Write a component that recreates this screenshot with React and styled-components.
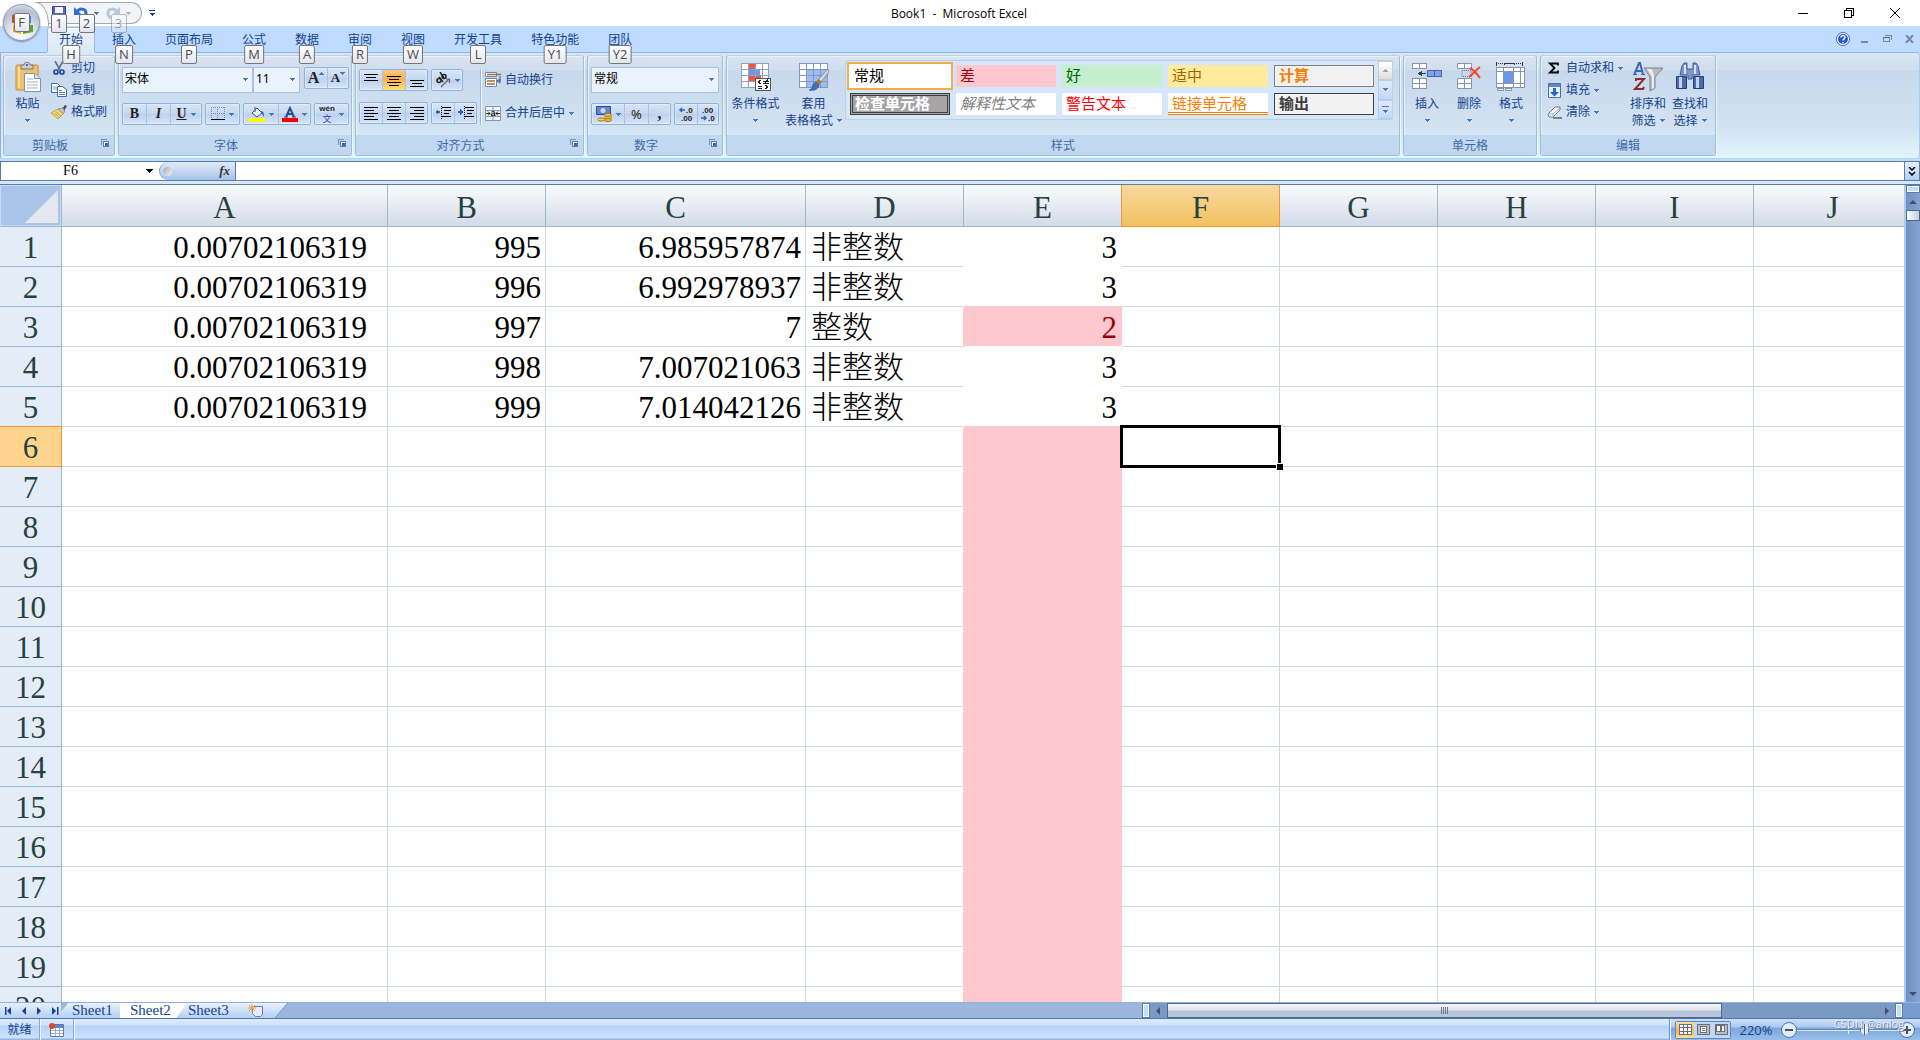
import React from "react";
import styled, { createGlobalStyle, css } from "styled-components";

const GlobalStyle = createGlobalStyle`
  * {
    box-sizing: border-box;
  }
  body {
    margin: 0;
    overflow: hidden;
    font-family: "Noto Sans", "Noto Sans CJK SC", sans-serif;
    font-size: 12px;
    line-height: 16px;
    color: #15428b;
  }
  button,
  input,
  select {
    font: inherit;
    color: inherit;
    margin: 0;
    padding: 0;
    border: none;
    border-radius: 0;
    background: none;
    outline: none;
  }
  svg {
    display: block;
    flex: none;
  }
`;

const Page = styled.div`
  display: flex;
  flex-direction: column;
  height: 100vh;
  background: #bfdbff;
`;

/* ---------- title bar ---------- */
const Header = styled.header`
  position: relative;
`;
const TitleBar = styled.div`
  display: flex;
  align-items: center;
  justify-content: space-between;
  height: 26px;
  padding-right: 2px;
  background: #fff;
`;
const TitleSide = styled.div`
  flex: 1;
  display: flex;
  justify-content: ${(props) => (props.$end ? "flex-end" : "flex-start")};
`;
const Title = styled.h1`
  margin: 0;
  padding-top: 1px;
  font: 12px/16px "Open Sans", sans-serif;
  color: #000;
`;
const WindowButton = styled.button`
  width: 46px;
  height: 24px;
  display: flex;
  align-items: center;
  justify-content: center;
`;
const QuickAccess = styled.div`
  position: relative;
  display: flex;
  align-items: flex-start;
  width: 106px;
  height: 22px;
  margin-left: 36px;
  padding: 3px 0 0 16px;
  border: 1px solid #a7a9ad;
  border-left: none;
  border-radius: 0 11px 11px 0;
  background: #f1f4f8;
  &::before {
    content: "";
    position: absolute;
    left: -13px;
    top: -1px;
    width: 24px;
    height: 44px;
    border: 1px solid #a7a9ad;
    border-radius: 50%;
    background: #fff;
    clip-path: inset(0 0 22px 12px);
  }
`;
const QuickButton = styled.button`
  position: relative;
  display: flex;
  align-items: center;
  gap: 6px;
  height: 14px;
  margin-right: ${(props) => props.$after || 0}px;
  opacity: ${(props) => (props.$disabled ? 0.45 : 1)};
`;
const CustomizeButton = styled.button`
  width: 20px;
  height: 22px;
  display: flex;
  align-items: center;
  justify-content: center;
`;
const OfficeButton = styled.button`
  position: absolute;
  left: 3px;
  top: 4px;
  width: 37px;
  height: 37px;
  display: flex;
  align-items: center;
  justify-content: center;
  border: 1px solid #8c99aa;
  border-radius: 50%;
  background: radial-gradient(circle at 50% 85%, #fff 0%, #e3e9f2 35%, #b3c0d4 70%, #eef2f8 100%);
  box-shadow: 0 1px 2px #7c8ca5;
`;
const KeyTip = styled.kbd`
  position: absolute;
  top: ${(props) => props.$top}px;
  left: 50%;
  transform: translateX(-50%);
  min-width: 16px;
  height: 19px;
  padding: 0 3px;
  border: 1px solid #767676;
  border-radius: 2px;
  background: linear-gradient(#fff, #e4e5f0);
  font: 13px/17px "Open Sans", sans-serif;
  text-align: center;
  color: #4c4c4c;
  z-index: 3;
`;

/* ---------- ribbon ---------- */
const TabBar = styled.nav`
  display: flex;
  gap: 5px;
  height: 26px;
  padding: 0 2px 0 47px;
  background: #bfdbff;
`;
const Tab = styled.button`
  position: relative;
  height: 26px;
  padding: 2px 12px 0;
  white-space: nowrap;
  ${(props) =>
    props.$active &&
    css`
      height: 25px;
      margin-top: 1px;
      border: 1px solid #9bbbe3;
      border-bottom: none;
      border-radius: 3px 3px 0 0;
      padding: 0 11px;
      background: linear-gradient(#ecf4fd, #dde8f5);
      box-shadow: inset 0 1px 0 #fff, 0 1px 0 #dde8f5;
      z-index: 1;
    `}
`;
const TabTools = styled.div`
  display: flex;
  align-items: center;
  gap: 8px;
  margin-left: auto;
  padding-right: 2px;
`;
const ToolButton = styled.button`
  display: flex;
  justify-content: center;
  width: 14px;
`;
const Ribbon = styled.section`
  display: flex;
  gap: 3px;
  height: 107px;
  padding: 2px 2px 0;
  border: 1px solid #8db2e3;
  border-right-color: #a9cdf0;
  border-bottom: 1px solid #a2e0f0;
  border-radius: 0 4px 4px 4px;
  background: linear-gradient(#dbe6f4 0, #cfdded 17px, #c7d8ed 18px, #d3e3f2 75px, #e3f4ff 104px);
`;
const Group = styled.section`
  flex: none;
  display: flex;
  flex-direction: column;
  width: ${(props) => props.$width}px;
  height: 101px;
  border: 1px solid #9ebfdb;
  border-top-color: #bccfe2;
  border-radius: 3px;
  box-shadow: 1px 1px 0 #eef6fd, inset 1px 1px 0 #e9f1fa;
`;
const GroupBody = styled.div`
  flex: 1;
  display: flex;
  padding: ${(props) => props.$pad || "1px 2px 0"};
`;
const GroupTitle = styled.h2`
  display: flex;
  align-items: center;
  height: 20px;
  margin: 0;
  padding-top: 1px;
  border-radius: 0 0 2px 2px;
  background: #c1d8f0;
  font-size: 12px;
  font-weight: normal;
  color: #3e6aaa;
  span {
    flex: 1;
    text-align: center;
  }
  button {
    display: flex;
    justify-content: center;
    width: 18px;
    height: 14px;
  }
`;
const Column = styled.div`
  display: flex;
  flex-direction: column;
  gap: ${(props) => props.$gap || 0}px;
`;
const Row = styled.div`
  display: flex;
  gap: ${(props) => (props.$gap === undefined ? 3 : props.$gap)}px;
`;
const BigButton = styled.button`
  display: flex;
  flex-direction: column;
  align-items: center;
  width: ${(props) => props.$width}px;
  height: 76px;
  padding-top: 5px;
  line-height: 17px;
  white-space: nowrap;
`;
const BigIcon = styled.span`
  height: 33px;
`;
const CaretLine = styled.span`
  display: flex;
  align-items: center;
  gap: 4px;
  height: 17px;
`;
const TextButton = styled.button`
  display: flex;
  align-items: center;
  gap: 4px;
  height: 22px;
  white-space: nowrap;
`;
const IconBox = styled.span`
  width: 16px;
  display: flex;
  justify-content: center;
`;
const Combo = styled.label`
  position: relative;
  display: block;
  width: ${(props) => props.$width}px;
  height: 26px;
  border: 1px solid #abc1de;
  background: #eaf2fb;
  select {
    appearance: none;
    width: 100%;
    height: 22px;
    padding: 0 2px;
    color: #000;
  }
  svg {
    position: absolute;
    right: 4px;
    top: 10px;
    pointer-events: none;
  }
`;
const ButtonStrip = styled.div`
  display: flex;
  height: 22px;
  border: 1px solid #8fb1de;
  border-radius: 2px;
  background: linear-gradient(#d6e4f6 0, #c9daf0 9px, #bdd1ec 10px, #d3e4f8 20px);
  box-shadow: inset 0 0 0 1px rgba(255, 255, 255, 0.35);
`;
const StripButton = styled.button`
  display: flex;
  align-items: ${(props) => (props.$raised ? "flex-start" : "center")};
  justify-content: center;
  gap: ${(props) => (props.$raised ? 0 : 4)}px;
  width: ${(props) => props.$width}px;
  font-size: 13px;
  color: #222;
  background: ${(props) =>
    props.$active ? "linear-gradient(#fdc88b, #fcae4e 9px, #fee07a)" : "none"};
  & + & {
    border-left: 1px solid #a9c3e6;
  }
  ${(props) =>
    props.$raised &&
    css`
      svg {
        margin-top: 4px;
      }
    `}
`;
const Letter = styled.span`
  font: ${(props) => props.$size || 14}px/20px "Liberation Serif", serif;
  font-weight: bold;
  font-style: ${(props) => (props.$italic ? "italic" : "normal")};
  text-decoration: ${(props) => (props.$underline ? "underline" : "none")};
`;
const Separator = styled.div`
  width: 2px;
  height: 56px;
  border-left: 1px solid #9bbce0;
  background: #f2f8fe;
`;

/* ---------- style gallery ---------- */
const Gallery = styled.div`
  display: flex;
  height: 60px;
  margin-top: 3px;
  border: 1px solid #b9d0ed;
  border-radius: 2px;
  background: #d4e6f8;
`;
const GalleryGrid = styled.div`
  display: grid;
  grid-template-columns: repeat(5, 100px);
  grid-auto-rows: 22px;
  gap: 6px;
  padding: 4px 4px 0;
`;
const StyleCell = styled.button`
  display: flex;
  align-items: center;
  padding: 0 4px 3px;
  font: 15px/18px "Noto Sans CJK SC", sans-serif;
  white-space: nowrap;
  color: ${(props) => props.$color};
  background: ${(props) => props.$fill || "#fff"};
  ${(props) => props.$bold && "font-weight: bold;"}
  ${(props) => props.$italic && "font-style: italic;"}
  ${(props) => props.$line && `border: 1px solid ${props.$line};`}
  ${(props) =>
    props.$selected &&
    css`
      outline: 2px solid #efb24b;
      outline-offset: 1px;
      box-shadow: 0 0 0 1px #fff;
    `}
  ${(props) =>
    props.$boxed &&
    css`
      border: 3px double #3f3f3f;
      padding: 0 2px 2px;
    `}
  ${(props) => props.$linked && "border-bottom: 3px double #ff8001; padding-bottom: 0;"}
`;
const GalleryScroll = styled.div`
  display: flex;
  flex-direction: column;
  width: 14px;
  button {
    flex: 1;
    display: flex;
    align-items: center;
    justify-content: center;
    border: 1px solid #b4cbec;
    border-right: none;
    background: linear-gradient(#dfeafb, #c2d8f7);
  }
  button:disabled {
    border-color: #ccc;
    background: linear-gradient(#fff, #dedede);
  }
`;

/* ---------- formula bar ---------- */
const FormulaBar = styled.div`
  display: flex;
  height: 20px;
  margin-top: 2px;
  border-top: 1px solid #567db0;
  border-bottom: 1px solid #567db0;
  background: #fff;
`;
const NameBox = styled.input`
  width: 140px;
  border-left: 1px solid #567db0;
  font: 14px/18px "Liberation Serif", serif;
  text-align: center;
  color: #000;
`;
const NameDrop = styled.button`
  display: flex;
  align-items: center;
  justify-content: center;
  width: 19px;
`;
const FxButton = styled.button`
  display: flex;
  align-items: center;
  justify-content: space-between;
  width: 77px;
  padding: 0 5px 0 3px;
  border-right: 1px solid #567db0;
  border-left: 1px solid #7da0cd;
  border-radius: 9px 0 0 9px;
  background: linear-gradient(#dfe9f7, #c6d8f1 50%, #a5c1e9);
  font: italic bold 13px/18px "Liberation Serif", serif;
  color: #3a3a3a;
`;
const Knob = styled.span`
  width: 9px;
  height: 9px;
  border-radius: 50%;
  background: linear-gradient(135deg, #9fa9b8, #f2f5f9);
`;
const FormulaInput = styled.input`
  flex: 1;
  min-width: 0;
  color: #000;
`;
const ExpandButton = styled.button`
  display: flex;
  align-items: center;
  justify-content: center;
  width: 16px;
  border: 1px solid #567db0;
  border-width: 0 1px;
  background: linear-gradient(#e6effb, #b5cdee);
`;
const Strip = styled.div`
  height: 3px;
  background: #d9e7f8;
`;

/* ---------- sheet ---------- */
const Workspace = styled.main`
  flex: 1;
  display: flex;
  min-height: 0;
  border-top: 1px solid #567db0;
`;
const SheetView = styled.div`
  flex: 1;
  min-width: 0;
  overflow: hidden;
  background: #fff;
`;
const Sheet = styled.table`
  width: 100%;
  table-layout: fixed;
  border-collapse: separate;
  border-spacing: 0;
  font: 31px/36px "Liberation Serif", "Noto Sans CJK SC", serif;
  color: #000;
`;
const ColumnHead = styled.th`
  position: relative;
  z-index: 1;
  height: 42px;
  padding: 5px 0 0;
  border-right: 1px solid #9eb6ce;
  border-bottom: 1px solid #9eb6ce;
  background: linear-gradient(#f9fcfd, #d3dbe9);
  font-weight: normal;
  color: #27413e;
  ${(props) =>
    props.$active &&
    css`
      border-color: #f29536;
      background: linear-gradient(#f9d99f, #f1c15f);
      box-shadow: -1px 0 0 #f29536;
    `}
`;
const Corner = styled.th`
  position: relative;
  z-index: 1;
  padding: 0;
  border: 1px solid #9eb6ce;
  border-width: 0 1px 1px 0;
  background: #a9c4e9;
  box-shadow: inset 0 0 0 1px #c9dcf4;
  svg {
    margin: 3px 3px 2px auto;
  }
`;
const RowHead = styled.th`
  height: 40px;
  padding: 3px 0 0;
  border-right: 1px solid #9eb6ce;
  border-bottom: 1px solid #9eb6ce;
  background: #e4ecf7;
  font-weight: normal;
  color: #27413e;
  ${(props) =>
    props.$active &&
    css`
      border-color: #f29536;
      background: #ffd58d;
      box-shadow: 0 -1px 0 #f29536;
    `}
`;
const Cell = styled.td`
  position: relative;
  padding: ${(props) => (props.$indent ? "3px 20px 0 5px" : "3px 4px 0 5px")};
  border-right: 1px solid #d0d7e5;
  border-bottom: 1px solid #d0d7e5;
  font-weight: 300;
  white-space: nowrap;
  text-align: ${(props) => (props.$text ? "left" : "right")};
  ${(props) =>
    props.$fill &&
    css`
      background: ${props.$fill};
      border-color: ${props.$fill};
      box-shadow: -1px 0 0 ${props.$fill}, 0 -1px 0 ${props.$fill};
      color: ${props.$ink};
    `}
`;
const Selection = styled.span`
  position: absolute;
  inset: -2px;
  border: 3px solid #000;
  z-index: 1;
  &::after {
    content: "";
    position: absolute;
    right: -5px;
    bottom: -5px;
    width: 6px;
    height: 6px;
    border: 1px solid #fff;
    border-width: 1px 0 0 1px;
    background: #000;
  }
`;
const VScroll = styled.div`
  display: flex;
  flex-direction: column;
  align-items: center;
  width: 16px;
  border-left: 2px solid #a9cbf3;
  background: linear-gradient(90deg, #7091bf, #85a3ce);
`;
const Splitter = styled.span`
  flex: none;
  width: ${(props) => (props.$vertical ? 8 : 14)}px;
  height: ${(props) => (props.$vertical ? 15 : 8)}px;
  border: 2px solid #fff;
  outline: 1px solid #567db0;
  outline-offset: -1px;
  background: #c7dbf4;
`;
const ScrollButton = styled.button`
  flex: none;
  display: flex;
  align-items: center;
  justify-content: center;
  width: ${(props) => (props.$wide ? 17 : 14)}px;
  height: ${(props) => (props.$wide ? 15 : 17)}px;
`;
const VThumb = styled.span`
  width: 14px;
  height: 11px;
  border: 1px solid #4f6691;
  background: linear-gradient(90deg, #fff, #c3cedc);
`;
const Fill = styled.span`
  flex: 1;
`;

/* ---------- sheet tabs ---------- */
const BottomBar = styled.div`
  display: flex;
  height: 17px;
  border-top: 1px solid #8db2e3;
  border-bottom: 1px solid #4f78ad;
  background: #7a9bd0;
`;
const BottomMain = styled.div`
  flex: 1;
  display: flex;
  background: #9db7dc;
`;
const SheetNav = styled.div`
  display: flex;
  width: 62px;
  padding-left: 2px;
  border-right: 1px solid #8db2e3;
  background: linear-gradient(#e6f0fc, #b7d0f3);
  button {
    display: flex;
    align-items: center;
    justify-content: center;
    width: 15px;
  }
`;
const SheetTab = styled.button`
  position: relative;
  width: 58px;
  padding-left: 10px;
  font: 15px/15px "Liberation Serif", serif;
  text-align: left;
  z-index: 0;
  &::before {
    content: "";
    position: absolute;
    z-index: -1;
    inset: 0 -8px 0 0;
    border-right: 1px solid #6f96cc;
    background: linear-gradient(#e9f2fd, #b5cff5);
    transform: skewX(-40deg);
  }
  ${(props) =>
    props.$active &&
    css`
      z-index: 1;
      background: #fff;
      clip-path: polygon(0 0, 115% 0, 97% 100%, 0 100%);
      &::before {
        background: #fff;
      }
    `}
`;
const NewSheet = styled(SheetTab)`
  width: 38px;
  padding-left: 12px;
`;
const HScroll = styled.div`
  display: flex;
  align-items: center;
  width: 40%;
  margin-left: auto;
  background: #7a99c3;
`;
const HThumb = styled.span`
  display: flex;
  align-items: center;
  justify-content: center;
  gap: 1px;
  width: 73%;
  height: 15px;
  border: 1px solid #4f6691;
  background: linear-gradient(#f4f6fa 0, #dfe4ec 6px, #b4c3d6 7px, #bccbdc 14px);
  i {
    width: 1px;
    height: 7px;
    background: #6c7785;
  }
`;

/* ---------- status bar ---------- */
const StatusBar = styled.footer`
  position: relative;
  display: flex;
  height: 21px;
  background: linear-gradient(#dcebfd 0, #cfe1fa 6px, #b4d1f6 7px, #cfe2fb 19px, #8fb6e6 20px);
`;
const StatusItem = styled.div`
  display: flex;
  align-items: center;
  justify-content: center;
  width: ${(props) => props.$width}px;
  border-right: 1px solid #8ba9d1;
  box-shadow: 1px 0 0 #f3f8fe;
`;
const StatusRight = styled.div`
  display: flex;
  align-items: center;
  margin-left: auto;
  padding: 0 5px;
  border-left: 1px solid #6d94c8;
  box-shadow: inset 1px 0 0 #e9f2fd;
  background: linear-gradient(#cfe0f8 0, #a9c8f1 8px, #7ea6db 9px, #98bdea 20px);
`;
const ViewButtons = styled.div`
  display: flex;
  height: 18px;
  border: 1px solid #5f87bf;
  border-radius: 2px;
`;
const ViewButton = styled.button`
  display: flex;
  align-items: center;
  justify-content: center;
  width: 18px;
  background: ${(props) => (props.$active ? "linear-gradient(#fbdcae, #f9b44d 9px, #fee391)" : "#c0d7f5")};
`;
const ZoomValue = styled.button`
  width: 50px;
  font-family: "Open Sans", sans-serif;
  font-size: 13px;
`;
const RoundButton = styled.button`
  display: flex;
  align-items: center;
  justify-content: center;
  width: 16px;
  height: 16px;
  border: 1px solid #4d6f9f;
  border-radius: 50%;
  background: #e3edf9;
`;
const ZoomRange = styled.input`
  appearance: none;
  width: 102px;
  height: 18px;
  background: linear-gradient(#5f86bd, #5f86bd) center 8px / 100% 1px no-repeat,
    linear-gradient(#d8e7fa, #d8e7fa) center 9px / 100% 1px no-repeat,
    linear-gradient(#e9f2fd, #e9f2fd) center 5px / 1px 8px no-repeat;
  &::-webkit-slider-thumb {
    appearance: none;
    width: 9px;
    height: 12px;
    background: linear-gradient(90deg, #44648f 1px, #e8f0fb 1px, #e8f0fb 4px, #44648f 4px, #44648f 5px, #e8f0fb 5px, #e8f0fb 8px, #44648f 8px);
    clip-path: polygon(0 0, 100% 0, 100% 65%, 50% 100%, 0 65%);
  }
`;
const Watermark = styled.span`
  position: absolute;
  right: 16px;
  top: -3px;
  font: 11px/16px "Open Sans", sans-serif;
  color: #e8edf4;
  text-shadow: 1px 1px 0 #75849c;
  pointer-events: none;
`;

/* ---------- icons ---------- */
const Svg = ({ w, h, children, crisp }) => (
  <svg
    width={w}
    height={h}
    viewBox={`0 0 ${w} ${h}`}
    fill="none"
    shapeRendering={crisp ? "crispEdges" : undefined}
    aria-hidden="true"
  >
    {children}
  </svg>
);
const Caret = ({ color = "#4a79b8", up }) => (
  <Svg w={5} h={3} crisp>
    <path d={up ? "M0 3h5V2H4V1H3V0H2v1H1v1H0z" : "M0 0h5v1H4v1H3v1H2V2H1V1H0z"} fill={color} />
  </Svg>
);
const Arrow = ({ dir, color = "#15428b", bar }) => {
  const d = {
    left: "M7 1v8l-4-4z",
    right: "M3 1v8l4-4z",
    up: "M1 7h8l-4-4z",
    down: "M1 3h8l-4 4z",
  }[dir];
  return (
    <Svg w={10} h={10}>
      <path d={d} fill={color} />
      {bar && <path d={dir === "left" ? "M1 1h1.500v8h-1.500z" : "M8 1h1.500v8h-1.500z"} fill={color} />}
    </Svg>
  );
};
const SaveIcon = () => (
  <Svg w={14} h={14}>
    <path d="M.5.5h13v13h-13z" fill="#5b63c9" stroke="#3c3f9c" />
    <path d="M3 1h8v6H3z" fill="#f3f4fc" />
    <path d="M4 9h7v4H4z" fill="#c5c9ea" />
  </Svg>
);
const UndoIcon = ({ flip, color = "#2f6fd0" }) => (
  <Svg w={14} h={14}>
    <g transform={flip ? "matrix(-1 0 0 1 14 0)" : undefined}>
      <path d="M3 6c2-4 9-4 9 1 0 2-1 4-3 5" stroke={color} strokeWidth="3" />
      <path d="M0 1v8h8z" fill={color} />
    </g>
  </Svg>
);
const OfficeIcon = () => (
  <Svg w={24} h={24}>
    <path d="M2 4l9-2v9l-9 1z" fill="#d8421a" />
    <path d="M5 6l4-1v4l-4 1z" fill="#fbe3d8" />
    <path d="M13 4l8 1v7h-8z" fill="#3d7edb" />
    <path d="M3 14h8v9l-8-2z" fill="#f6a81c" />
    <path d="M13 14h10v7l-10 2z" fill="#5fa526" />
    <path d="M15 16h5v3l-5 1z" fill="#e4f2d3" />
  </Svg>
);
const PasteIcon = () => (
  <Svg w={28} h={30}>
    <rect x="2" y="3" width="22" height="25" rx="1" fill="#f2c067" stroke="#c78a35" />
    <path d="M4 5h2v21H4z" fill="#f9dc9d" />
    <path d="M7 3h3c0-4 6-4 6 0h3v4H7z" fill="#c9ced6" stroke="#6f7680" />
    <circle cx="13" cy="3" r="1" fill="#444" />
    <path d="M10.500 11.500h10l6 5v13h-16z" fill="#fff" stroke="#7e93b3" />
    <path d="M20.500 11.500v5h6" fill="#dbe6f5" stroke="#7e93b3" />
    <path d="M13 17h6M13 20h11M13 23h11M13 26h11" stroke="#9db1cf" />
  </Svg>
);
const CutIcon = () => (
  <Svg w={14} h={14}>
    <path d="M3 0l5 9M11 0L6 9" stroke="#5b6f8f" strokeWidth="1.600" />
    <circle cx="4" cy="11" r="2" stroke="#1f4e9e" strokeWidth="1.700" />
    <circle cx="10" cy="11" r="2" stroke="#1f4e9e" strokeWidth="1.700" />
  </Svg>
);
const CopyIcon = () => (
  <Svg w={16} h={14}>
    <path d="M.5.5h6l3 3v6h-9z" fill="#fff" stroke="#3f69ad" />
    <path d="M2 4h4M2 6h4" stroke="#7a9bd0" />
    <path d="M6.500 3.500h5l4 3v7h-9z" fill="#fff" stroke="#3f69ad" />
    <path d="M8 7.500h3M8 9.500h6M8 11.500h6" stroke="#5b84c4" />
  </Svg>
);
const BrushIcon = () => (
  <Svg w={16} h={14}>
    <path d="M11 4l3-4 2 1-3 5z" fill="#4a3f86" />
    <path d="M7 4l5-1 2 3-2 3z" fill="#c9c6bd" stroke="#77736a" strokeWidth=".7" />
    <path d="M0 8l7-4 5 5-5 5z" fill="#f3d873" stroke="#a98b2c" strokeWidth=".7" />
    <path d="M3 8l5 4M5 7l5 4" stroke="#b8963a" strokeWidth=".7" />
  </Svg>
);
const LauncherIcon = () => (
  <Svg w={8} h={8} crisp>
    <path d="M0 6V0h6" stroke="#6f93c2" strokeWidth="2" />
    <path d="M2.500 2.500h5v5h-5z" fill="#fff" stroke="#5b7fb0" />
    <path d="M4 4h3v3H4z" fill="#44679a" />
  </Svg>
);
const BorderIcon = () => (
  <Svg w={14} h={14} crisp>
    <path d="M0 .5h14M0 6.500h14M.5 0v12M6.500 0v12M13.500 0v12" stroke="#7089a8" strokeDasharray="1 1" />
    <path d="M0 12h14v1H0z" fill="#000" />
  </Svg>
);
const FillIcon = () => (
  <Svg w={16} h={16}>
    <path d="M3 7l5-5 5 5-5 4z" fill="#eef3fa" stroke="#41506a" />
    <path d="M6 1v5" stroke="#41506a" />
    <path d="M12 5c3 0 3 3 3 6l-2-3z" fill="#2f6fd0" />
    <path d="M0 12h16v4H0z" fill="#ffff00" />
  </Svg>
);
const FontColorIcon = () => (
  <Svg w={16} h={16}>
    <path d="M4 11L8 2l4 9M5.500 8h5" stroke="#2b4f8c" strokeWidth="2" />
    <path d="M2 11h4M10 11h4" stroke="#2b4f8c" />
    <path d="M0 12h16v4H0z" fill="#f00" />
  </Svg>
);
const Phonetic = styled.span`
  display: flex;
  flex-direction: column;
  align-items: center;
  font: bold 8px/9px "Liberation Sans", sans-serif;
  color: #222;
  b {
    font: 9px/11px "Noto Sans CJK SC", sans-serif;
    color: #2a3fc0;
  }
`;
const Lines = ({ rows }) => (
  <Svg w={14} h={14} crisp>
    {rows.map(([x, y, w]) => (
      <path key={y} d={`M${x} ${y}h${w}v1h-${w}z`} fill="#000" />
    ))}
  </Svg>
);
const IndentIcon = ({ flip }) => (
  <Svg w={16} h={14} crisp>
    <path d="M7 1h9v1H7zM9 4h7v1H9zM9 7h5v1H9zM7 10h9v1H7z" fill="#000" />
    <path d="M6.500 0v14" stroke="#000" strokeDasharray="1 1" />
    <path d={flip ? "M0 5h2V3l3 3-3 3V7H0z" : "M5 5H3V3L0 6l3 3V7h2z"} fill="#2f62c0" />
  </Svg>
);
const OrientIcon = () => (
  <Svg w={16} h={16}>
    <circle cx="4" cy="8.500" r="2" stroke="#222" strokeWidth="1.500" />
    <path d="M4 5l4 5" stroke="#222" strokeWidth="1.500" />
    <circle cx="9" cy="4.500" r="2" stroke="#222" strokeWidth="1.500" />
    <path d="M5 0l4 6" stroke="#222" strokeWidth="1.500" />
    <path d="M6 15l8-8M14.500 7v4M15 7h-4" stroke="#6d5f66" strokeWidth="1.200" />
  </Svg>
);
const WrapIcon = () => (
  <Svg w={16} h={16}>
    <path d="M.5.5h11v4H.5zM.5 6.500h11v8H.5z" fill="#fff" stroke="#7287a5" />
    <path d="M2 2.500h14M2 9h8M2 12h8" stroke="#a0702f" strokeWidth="1.500" />
    <path d="M15 4v5h-2M12 9l3-2v4z" stroke="#44638f" />
  </Svg>
);
const MergeIcon = () => (
  <Svg w={16} h={15}>
    <path d="M.5.5h15v14H.5zM.5 4.500h15M.5 10.500h15M8 .5v4M8 10.500v4" fill="#f4f7fb" stroke="#8598b3" />
    <text x="5.500" y="10" fontFamily="Liberation Sans" fontWeight="bold" fontSize="9" fill="#111">
      a
    </text>
    <path d="M1 7.500h4M11 7.500h4M3 5.500l2 2-2 2M13 5.500l-2 2 2 2" stroke="#222" />
  </Svg>
);
const MoneyIcon = () => (
  <Svg w={16} h={16}>
    <path d="M.5.5h14v8H.5z" fill="#5f86cf" stroke="#2e4f93" />
    <circle cx="7" cy="4.500" r="2.500" fill="#c8d9f3" />
    <ellipse cx="12" cy="9" rx="3.500" ry="1.500" fill="#ffd75e" stroke="#a9781b" />
    <ellipse cx="12" cy="11.500" rx="3.500" ry="1.500" fill="#f4b93a" stroke="#a9781b" />
    <ellipse cx="5" cy="13.500" rx="3.500" ry="1.500" fill="#ffd75e" stroke="#a9781b" />
    <ellipse cx="12" cy="14" rx="3.500" ry="1.500" fill="#f4b93a" stroke="#a9781b" />
  </Svg>
);
const DecimalIcon = ({ less }) => (
  <Svg w={16} h={16}>
    <text x={less ? 2 : 8} y="7" fontFamily="Liberation Sans" fontWeight="bold" fontSize="8" fill="#222">
      {less ? ".00" : ".0"}
    </text>
    <text x={less ? 8 : 3} y="15" fontFamily="Liberation Sans" fontWeight="bold" fontSize="8" fill="#222">
      {less ? ".0" : ".00"}
    </text>
    <path d={less ? "M1 12h5M4 10l2 2-2 2" : "M2 4h5M4 2L2 4l2 2"} stroke="#2f62c0" strokeWidth="1.500" />
  </Svg>
);
const ConditionIcon = () => (
  <Svg w={30} h={30} crisp>
    <path d="M.5 1.500h27v24H.5z" fill="#fff" />
    <path d="M7 1h7v6H7zM7 13h13v6H7z" fill="#f0553f" />
    <path d="M7 7h12v6H7z" fill="#6c97ea" />
    <path d="M.5 1v25M7.500 1v25M14.500 1v25M21.500 1v25M27.500 1v25M0 7.500h28M0 13.500h28M0 19.500h28M0 25.500h28M0 1.500h28" stroke="#8da3c4" />
    <path d="M14.500 16.500h15v12h-15z" fill="#fafafa" stroke="#555" />
    <path d="M20 18l-3 2 3 2M17 24h4M17 26h4M22 19h6M22 21h6M27 17l-3 5M24 23l3 2-3 2" stroke="#222" />
  </Svg>
);
const TableStyleIcon = () => (
  <Svg w={30} h={30}>
    <path d="M.5 1.500h28v24H.5z" fill="#fff" />
    <path d="M7 7h21v18H7z" fill="#9dbdf2" />
    <path d="M.5 1v25M7.500 1v25M14.500 1v25M21.500 1v25M28.500 1v25M0 1.500h29M0 7.500h29M0 13.500h29M0 19.500h29M0 25.500h29" stroke="#7f9ac2" />
    <path d="M29 7l1 3-9 11-3-2z" fill="#d9d9d9" stroke="#777" strokeWidth=".7" />
    <path d="M20 17l3 3-3 3-3-3z" fill="#b8792c" />
    <path d="M10 28c4 0 3-7 7-8l3 3c-1 5-6 6-10 5z" fill="#3f6fbf" stroke="#2c4f8e" strokeWidth=".7" />
  </Svg>
);
const InsertCellIcon = () => (
  <Svg w={32} h={28} crisp>
    <path d="M1.500 1.500h14v5h-14zM8.500 1v5M1.500 16.500h14v10h-14zM8.500 16v10M1 21.500h14" fill="#fff" stroke="#8794ab" />
    <path d="M16.500 8.500h14v6h-14z" fill="#7fa3ea" stroke="#4463a8" />
    <path d="M23.500 8v6" stroke="#4463a8" />
    <path d="M7 11h8v1H7zM7 11.500l4-3v6z" fill="#333f52" />
  </Svg>
);
const DeleteCellIcon = () => (
  <Svg w={26} h={28}>
    <path d="M1.500 1.500h14v5h-14zM8.500 1v5M1.500 16.500h14v10h-14zM8.500 16v10M1 21.500h14" fill="#fff" stroke="#8794ab" />
    <path d="M6 8.500h9v6H6z" stroke="#5472b0" strokeDasharray="1 1" />
    <path d="M14 6c4 2 7 6 10 10M24 5c-4 3-7 7-11 10" stroke="#ee4a2c" strokeWidth="2" />
  </Svg>
);
const FormatCellIcon = () => (
  <Svg w={32} h={30} crisp>
    <path d="M1 1.500h27" stroke="#333" strokeDasharray="1 1" />
    <path d="M1.500 0v4M27.500 0v4M9 1.500h11M9 1v2M19 1v2" stroke="#333" />
    <path d="M1.500 5.500h28v20h-28z" fill="#fff" stroke="#8794ab" />
    <path d="M1 9.500h28M1 21.500h28M8.500 5v20M18.500 5v20M25.500 5v20" stroke="#8794ab" />
    <path d="M9 10h9v11H9z" fill="#6e97e8" />
    <path d="M2 26h6v2H2zM10 26h6v2h-6z" fill="#fff" stroke="#8794ab" />
  </Svg>
);
const SigmaIcon = () => (
  <Svg w={12} h={12}>
    <path d="M10 3.500V1.500H2l4.500 4.500L2 10.500h8v-2" stroke="#000" strokeWidth="1.800" />
  </Svg>
);
const FillDownIcon = () => (
  <Svg w={13} h={15}>
    <path d="M.5.5h12v14H.5z" fill="#eaf1fb" stroke="#4b6fae" />
    <path d="M1 1h11v3H1z" fill="#6387c6" />
    <path d="M5 5h3v4h3l-4.500 4.500L2 9h3z" fill="#2b62cf" />
  </Svg>
);
const EraserIcon = () => (
  <Svg w={15} h={13}>
    <path d="M1 8l7-7h5v3l-7 7H2z" fill="#f6f7fa" stroke="#707a8c" />
    <path d="M1 8h5l7-6M6 8v3" stroke="#a3adbd" />
    <path d="M6 12h9" stroke="#222" />
  </Svg>
);
const SortIcon = () => (
  <Svg w={30} h={30}>
    <path d="M11 6h19l-8 9v11l-5 3V15z" fill="#b7bcc3" stroke="#7d838c" />
    <path d="M14 7h5l2 7v12l-2 1V15z" fill="#eceef1" />
    <path d="M1.500 12L6 1h1l3 11M3 9h6" stroke="#3b63b5" strokeWidth="2" />
    <path d="M0 12.500h4M8 12.500h4" stroke="#3b63b5" />
    <path d="M3 19v-2h8L2 27h8l1-2" stroke="#8b2b2f" strokeWidth="2" />
  </Svg>
);
const FindIcon = () => (
  <Svg w={30} h={28}>
    <path d="M7 4l2-3h3v6h6V1h3l2 3 2 9h-8v4h-4v-4H5z" fill="#7d98c8" stroke="#3c5a93" />
    <path d="M1.500 14.500h10v12h-10zM18.500 14.500h10v12h-10z" fill="#4a6aa9" stroke="#233f77" />
    <path d="M4 15h3v11H4zM21 15h3v11h-3z" fill="#c3d3ee" />
    <path d="M10 3v9M20 3v9" stroke="#d6e2f5" strokeWidth="2" />
  </Svg>
);
const HelpIcon = () => (
  <Svg w={14} h={14}>
    <circle cx="7" cy="7" r="6.500" fill="#fff" stroke="#3e66b8" />
    <circle cx="7" cy="7" r="5" fill="#2557cf" />
    <path d="M5 5.500c0-2.500 4-2.500 4 0 0 1.500-2 1.300-2 3M7 10v1.300" stroke="#fff" strokeWidth="1.400" />
  </Svg>
);
const MacroIcon = () => (
  <Svg w={16} h={14}>
    <path d="M1.500 1.500h13v12h-13z" fill="#fff" stroke="#5b78a9" />
    <path d="M2 2h12v3H2z" fill="#5c86d3" />
    <path d="M2 7.500h12M2 10.500h12M6.500 5v8M10.500 5v8" stroke="#9db0cf" />
    <circle cx="3" cy="3" r="3" fill="#e4472b" />
  </Svg>
);
const NewSheetIcon = () => (
  <Svg w={16} h={13}>
    <path d="M4.500 2.500h10v8l-2 2h-5l-3-3z" fill="#e6edf8" stroke="#6280b0" />
    <path d="M4 0v8M0 4h8M1 1l6 6M7 1L1 7" stroke="#e9a021" />
  </Svg>
);

/* ---------- data ---------- */
const TABS = [
  ["开始", "H"],
  ["插入", "N"],
  ["页面布局", "P"],
  ["公式", "M"],
  ["数据", "A"],
  ["审阅", "R"],
  ["视图", "W"],
  ["开发工具", "L"],
  ["特色功能", "Y1"],
  ["团队", "Y2"],
];
const STYLES = [
  { name: "常规", $color: "#000", $selected: true },
  { name: "差", $color: "#9c0006", $fill: "#ffc7ce" },
  { name: "好", $color: "#006100", $fill: "#c6efce" },
  { name: "适中", $color: "#9c6500", $fill: "#ffeb9c" },
  { name: "计算", $color: "#fa7d00", $fill: "#f2f2f2", $line: "#7f7f7f", $bold: true },
  { name: "检查单元格", $color: "#fff", $fill: "#a5a5a5", $boxed: true, $bold: true },
  { name: "解释性文本", $color: "#7f7f7f", $italic: true },
  { name: "警告文本", $color: "#f00" },
  { name: "链接单元格", $color: "#fa7d00", $linked: true },
  { name: "输出", $color: "#3f3f3f", $fill: "#f2f2f2", $line: "#3f3f3f", $bold: true },
];
const COLUMNS = [
  ["A", 326],
  ["B", 158],
  ["C", 260],
  ["D", 158],
  ["E", 158],
  ["F", 158],
  ["G", 158],
  ["H", 158],
  ["I", 158],
  ["J", 158],
];
const DATA = [
  ["0.00702106319", "995", "6.985957874", "非整数", "3"],
  ["0.00702106319", "996", "6.992978937", "非整数", "3"],
  ["0.00702106319", "997", "7", "整数", "2"],
  ["0.00702106319", "998", "7.007021063", "非整数", "3"],
  ["0.00702106319", "999", "7.014042126", "非整数", "3"],
];
const ROW_COUNT = 20;

const ALIGN_TOP = [[0, 1, 14], [2, 4, 10], [0, 7, 14]];
const ALIGN_MIDDLE = [[0, 3, 14], [2, 6, 10], [0, 9, 14], [2, 12, 10]];
const ALIGN_BOTTOM = [[0, 7, 14], [2, 10, 10], [0, 13, 14]];
const ALIGN_LEFT = [[0, 1, 14], [0, 4, 10], [0, 7, 14], [0, 10, 10], [0, 13, 14]];
const ALIGN_CENTER = [[0, 1, 14], [2, 4, 10], [0, 7, 14], [2, 10, 10], [0, 13, 14]];
const ALIGN_RIGHT = [[0, 1, 14], [4, 4, 10], [0, 7, 14], [4, 10, 10], [0, 13, 14]];

const RibbonGroup = ({ title, width, pad, launcher, children }) => (
  <Group $width={width}>
    <GroupBody $pad={pad}>{children}</GroupBody>
    <GroupTitle>
      <span>{title}</span>
      {launcher && (
        <button aria-label={title}>
          <LauncherIcon />
        </button>
      )}
    </GroupTitle>
  </Group>
);

const Big = ({ icon, lines, width }) => (
  <BigButton $width={width}>
    <BigIcon>{icon}</BigIcon>
    <span>{lines[0]}</span>
    <CaretLine>
      {lines[1]}
      <Caret />
    </CaretLine>
  </BigButton>
);

const TitleArea = () => (
  <TitleBar>
    <TitleSide>
      <QuickAccess>
        <QuickButton aria-label="保存" $after={8}>
          <SaveIcon />
          <KeyTip $top={8}>1</KeyTip>
        </QuickButton>
        <QuickButton aria-label="撤消" $after={7}>
          <UndoIcon />
          <Caret />
          <KeyTip $top={8}>2</KeyTip>
        </QuickButton>
        <QuickButton aria-label="恢复" $disabled>
          <UndoIcon flip color="#7d8ea8" />
          <Caret color="#777" />
          <KeyTip $top={8}>3</KeyTip>
        </QuickButton>
      </QuickAccess>
      <CustomizeButton aria-label="自定义快速访问工具栏">
        <Svg w={6} h={6} crisp>
          <path d="M0 0h6v1H0zM0 3h6L3 6z" fill="#1f3f77" />
        </Svg>
      </CustomizeButton>
    </TitleSide>
    <Title>Book1 &nbsp;-&nbsp; Microsoft Excel</Title>
    <TitleSide $end>
      <WindowButton aria-label="最小化">
        <Svg w={10} h={10} crisp>
          <path d="M0 5h10v1H0z" fill="#000" />
        </Svg>
      </WindowButton>
      <WindowButton aria-label="还原">
        <Svg w={10} h={10} crisp>
          <path d="M.5 2.500h7v7h-7zM2.500 2V.5h7v7H8" stroke="#000" />
        </Svg>
      </WindowButton>
      <WindowButton aria-label="关闭">
        <Svg w={10} h={10}>
          <path d="M0 0l10 10M10 0L0 10" stroke="#000" />
        </Svg>
      </WindowButton>
    </TitleSide>
  </TitleBar>
);

const RibbonTabs = () => (
  <TabBar>
    {TABS.map(([name, key], i) => (
      <Tab key={name} $active={i === 0}>
        {name}
        <KeyTip $top={i === 0 ? 17 : 19}>{key}</KeyTip>
      </Tab>
    ))}
    <TabTools>
      <ToolButton aria-label="帮助">
        <HelpIcon />
      </ToolButton>
      <ToolButton aria-label="最小化工作簿">
        <Svg w={8} h={8} crisp>
          <path d="M0 6h7v2H0z" fill="#7b8798" />
        </Svg>
      </ToolButton>
      <ToolButton aria-label="还原工作簿">
        <Svg w={9} h={8} crisp>
          <path d="M.5 2.500h6v4h-6zM2 .5h6.500V5" stroke="#7b8798" />
          <path d="M0 2h7v1H0z" fill="#5c6676" />
        </Svg>
      </ToolButton>
      <ToolButton aria-label="关闭工作簿">
        <Svg w={9} h={8}>
          <path d="M1 0l7 8M8 0L1 8" stroke="#7b8798" strokeWidth="2" />
        </Svg>
      </ToolButton>
    </TabTools>
  </TabBar>
);

const ClipboardGroup = () => (
  <RibbonGroup title="剪贴板" width={112} launcher>
    <Row $gap={2}>
      <Big icon={<PasteIcon />} lines={["粘贴"]} width={43} />
      <Column>
        <TextButton>
          <IconBox>
            <CutIcon />
          </IconBox>
          剪切
        </TextButton>
        <TextButton>
          <IconBox>
            <CopyIcon />
          </IconBox>
          复制
        </TextButton>
        <TextButton>
          <IconBox>
            <BrushIcon />
          </IconBox>
          格式刷
        </TextButton>
      </Column>
    </Row>
  </RibbonGroup>
);

const FontGroup = () => (
  <RibbonGroup title="字体" width={234} pad="11px 3px 0" launcher>
    <Column $gap={10}>
      <Row $gap={0}>
        <Combo $width={131}>
          <select aria-label="字体">
            <option>宋体</option>
          </select>
          <Caret />
        </Combo>
        <Combo $width={47}>
          <select aria-label="字号">
            <option>11</option>
          </select>
          <Caret />
        </Combo>
        <Fill />
        <ButtonStrip>
          <StripButton $width={22} $raised aria-label="增大字号">
            <Letter $size={16}>A</Letter>
            <Caret up />
          </StripButton>
          <StripButton $width={21} $raised aria-label="减小字号">
            <Letter $size={13}>A</Letter>
            <Caret />
          </StripButton>
        </ButtonStrip>
      </Row>
      <Row>
        <ButtonStrip>
          <StripButton $width={23}>
            <Letter>B</Letter>
          </StripButton>
          <StripButton $width={24}>
            <Letter $italic>I</Letter>
          </StripButton>
          <StripButton $width={31}>
            <Letter $underline>U</Letter>
            <Caret />
          </StripButton>
        </ButtonStrip>
        <ButtonStrip>
          <StripButton $width={33} aria-label="边框">
            <BorderIcon />
            <Caret />
          </StripButton>
        </ButtonStrip>
        <ButtonStrip>
          <StripButton $width={34} aria-label="填充颜色">
            <FillIcon />
            <Caret />
          </StripButton>
          <StripButton $width={32} aria-label="字体颜色">
            <FontColorIcon />
            <Caret />
          </StripButton>
        </ButtonStrip>
        <ButtonStrip>
          <StripButton $width={33}>
            <Phonetic>
              wén<b>文</b>
            </Phonetic>
            <Caret />
          </StripButton>
        </ButtonStrip>
      </Row>
    </Column>
  </RibbonGroup>
);

const AlignGroup = () => (
  <RibbonGroup title="对齐方式" width={229} pad="13px 3px 0" launcher>
    <Row>
      <Column $gap={11}>
        <Row>
          <ButtonStrip>
            <StripButton $width={22} aria-label="顶端对齐">
              <Lines rows={ALIGN_TOP} />
            </StripButton>
            <StripButton $width={23} $active aria-label="垂直居中">
              <Lines rows={ALIGN_MIDDLE} />
            </StripButton>
            <StripButton $width={22} aria-label="底端对齐">
              <Lines rows={ALIGN_BOTTOM} />
            </StripButton>
          </ButtonStrip>
          <ButtonStrip>
            <StripButton $width={30} aria-label="方向">
              <OrientIcon />
              <Caret />
            </StripButton>
          </ButtonStrip>
        </Row>
        <Row>
          <ButtonStrip>
            <StripButton $width={22} aria-label="文本左对齐">
              <Lines rows={ALIGN_LEFT} />
            </StripButton>
            <StripButton $width={23} aria-label="居中">
              <Lines rows={ALIGN_CENTER} />
            </StripButton>
            <StripButton $width={22} aria-label="文本右对齐">
              <Lines rows={ALIGN_RIGHT} />
            </StripButton>
          </ButtonStrip>
          <ButtonStrip>
            <StripButton $width={22} aria-label="减少缩进量">
              <IndentIcon />
            </StripButton>
            <StripButton $width={22} aria-label="增加缩进量">
              <IndentIcon flip />
            </StripButton>
          </ButtonStrip>
        </Row>
      </Column>
      <Separator />
      <Column $gap={11}>
        <TextButton>
          <IconBox>
            <WrapIcon />
          </IconBox>
          自动换行
        </TextButton>
        <TextButton>
          <IconBox>
            <MergeIcon />
          </IconBox>
          合并后居中
          <Caret />
        </TextButton>
      </Column>
    </Row>
  </RibbonGroup>
);

const NumberGroup = () => (
  <RibbonGroup title="数字" width={136} pad="11px 3px 0" launcher>
    <Column $gap={10}>
      <Combo $width={128}>
        <select aria-label="数字格式">
          <option>常规</option>
        </select>
        <Caret />
      </Combo>
      <Row>
        <ButtonStrip>
          <StripButton $width={32} aria-label="会计数字格式">
            <MoneyIcon />
            <Caret />
          </StripButton>
          <StripButton $width={24}>%</StripButton>
          <StripButton $width={22}>
            <Letter $size={16}>,</Letter>
          </StripButton>
        </ButtonStrip>
        <ButtonStrip>
          <StripButton $width={22} aria-label="增加小数位数">
            <DecimalIcon />
          </StripButton>
          <StripButton $width={21} aria-label="减少小数位数">
            <DecimalIcon less />
          </StripButton>
        </ButtonStrip>
      </Row>
    </Column>
  </RibbonGroup>
);

const StylesGroup = () => (
  <RibbonGroup title="样式" width={674}>
    <Row $gap={0}>
      <Big icon={<ConditionIcon />} lines={["条件格式"]} width={53} />
      <Big icon={<TableStyleIcon />} lines={["套用", "表格格式"]} width={63} />
      <Gallery>
        <GalleryGrid>
          {STYLES.map(({ name, ...look }) => (
            <StyleCell key={name} {...look}>
              {name}
            </StyleCell>
          ))}
        </GalleryGrid>
        <GalleryScroll>
          <button disabled aria-label="上一行">
            <Caret up color="#a0a0a0" />
          </button>
          <button aria-label="下一行">
            <Caret />
          </button>
          <button aria-label="其他">
            <Svg w={7} h={7} crisp>
              <path d="M0 0h7v1H0zM1 4h5v1H5v1H4v1H3V6H2V5H1z" fill="#4a79b8" />
            </Svg>
          </button>
        </GalleryScroll>
      </Gallery>
    </Row>
  </RibbonGroup>
);

const CellsGroup = () => (
  <RibbonGroup title="单元格" width={134}>
    <Big icon={<InsertCellIcon />} lines={["插入"]} width={42} />
    <Big icon={<DeleteCellIcon />} lines={["删除"]} width={42} />
    <Big icon={<FormatCellIcon />} lines={["格式"]} width={42} />
  </RibbonGroup>
);

const EditGroup = () => (
  <RibbonGroup title="编辑" width={176} pad="1px 4px 0 5px">
    <Column>
      <TextButton>
        <IconBox>
          <SigmaIcon />
        </IconBox>
        自动求和
        <Caret />
      </TextButton>
      <TextButton>
        <IconBox>
          <FillDownIcon />
        </IconBox>
        填充
        <Caret />
      </TextButton>
      <TextButton>
        <IconBox>
          <EraserIcon />
        </IconBox>
        清除
        <Caret />
      </TextButton>
    </Column>
    <Fill />
    <Big icon={<SortIcon />} lines={["排序和", "筛选"]} width={42} />
    <Big icon={<FindIcon />} lines={["查找和", "选择"]} width={42} />
  </RibbonGroup>
);

const cellLook = (row, col) => {
  if (col !== 4) return {};
  const filled = row === 2 || row > 4;
  return filled ? { $fill: "#ffc7ce", $ink: "#9c0006" } : { $fill: "#ffffff", $ink: "#000" };
};

const SheetGrid = () => (
  <SheetView>
    <Sheet>
      <colgroup>
        <col width={62} />
        {COLUMNS.map(([name, width]) => (
          <col key={name} width={width} />
        ))}
      </colgroup>
      <thead>
        <tr>
          <Corner aria-label="全选">
            <Svg w={34} h={34}>
              <path d="M34 1v33H1z" fill="#e4e7ee" />
            </Svg>
          </Corner>
          {COLUMNS.map(([name]) => (
            <ColumnHead key={name} $active={name === "F"}>
              {name}
            </ColumnHead>
          ))}
        </tr>
      </thead>
      <tbody>
        {Array.from({ length: ROW_COUNT }, (_, row) => (
          <tr key={row}>
            <RowHead $active={row === 5}>{row + 1}</RowHead>
            {COLUMNS.map(([name], col) => (
              <Cell key={name} $text={col === 3} $indent={col === 0} {...cellLook(row, col)}>
                {DATA[row] && DATA[row][col]}
                {row === 5 && name === "F" && <Selection />}
              </Cell>
            ))}
          </tr>
        ))}
      </tbody>
    </Sheet>
  </SheetView>
);

const App = () => {
  return (
    <Page>
      <GlobalStyle />
      <Header>
        <TitleArea />
        <RibbonTabs />
        <OfficeButton aria-label="Office">
          <OfficeIcon />
          <KeyTip $top={8}>F</KeyTip>
        </OfficeButton>
      </Header>
      <Ribbon>
        <ClipboardGroup />
        <FontGroup />
        <AlignGroup />
        <NumberGroup />
        <StylesGroup />
        <CellsGroup />
        <EditGroup />
      </Ribbon>
      <FormulaBar>
        <NameBox aria-label="名称框" defaultValue="F6" />
        <NameDrop aria-label="名称列表">
          <Svg w={7} h={4} crisp>
            <path d="M0 0h7L3.500 4z" fill="#000" />
          </Svg>
        </NameDrop>
        <FxButton>
          <Knob />
          fx
        </FxButton>
        <FormulaInput aria-label="编辑栏" />
        <ExpandButton aria-label="展开编辑栏">
          <Svg w={8} h={9}>
            <path d="M1 0l3 3 3-3M1 5l3 3 3-3" stroke="#000" strokeWidth="1.500" />
          </Svg>
        </ExpandButton>
      </FormulaBar>
      <Strip />
      <Workspace>
        <SheetGrid />
        <VScroll>
          <Splitter />
          <ScrollButton aria-label="向上滚动">
            <Arrow dir="up" color="#3d4f7a" />
          </ScrollButton>
          <VThumb />
          <Fill />
          <ScrollButton aria-label="向下滚动">
            <Arrow dir="down" color="#3d4f7a" />
          </ScrollButton>
        </VScroll>
      </Workspace>
      <BottomBar>
        <BottomMain>
          <SheetNav>
            <button aria-label="第一张">
              <Arrow dir="left" bar />
            </button>
            <button aria-label="上一张">
              <Arrow dir="left" />
            </button>
            <button aria-label="下一张">
              <Arrow dir="right" />
            </button>
            <button aria-label="最后一张">
              <Arrow dir="right" bar />
            </button>
          </SheetNav>
          <SheetTab>Sheet1</SheetTab>
          <SheetTab $active>Sheet2</SheetTab>
          <SheetTab>Sheet3</SheetTab>
          <NewSheet aria-label="插入工作表">
            <NewSheetIcon />
          </NewSheet>
          <HScroll>
            <Splitter $vertical />
            <ScrollButton $wide aria-label="向左滚动">
              <Arrow dir="left" color="#3d4f7a" />
            </ScrollButton>
            <HThumb>
              <i />
              <i />
              <i />
              <i />
            </HThumb>
            <Fill />
            <ScrollButton $wide aria-label="向右滚动">
              <Arrow dir="right" color="#3d4f7a" />
            </ScrollButton>
            <Splitter $vertical />
          </HScroll>
        </BottomMain>
        <ScrollButton as="span" $wide />
      </BottomBar>
      <StatusBar>
        <StatusItem $width={40}>就绪</StatusItem>
        <StatusItem $width={34}>
          <MacroIcon />
        </StatusItem>
        <StatusRight>
          <ViewButtons>
            <ViewButton $active aria-label="普通">
              <Svg w={13} h={11} crisp>
                <path d="M.5.5h12v10H.5zM0 3.500h13M0 7.500h13M4.500 0v11M8.500 0v11" fill="#fff" stroke="#6b6f78" />
              </Svg>
            </ViewButton>
            <ViewButton aria-label="页面布局">
              <Svg w={13} h={11} crisp>
                <path d="M.5.5h12v10H.5z" fill="#b9bfc9" stroke="#6b6f78" />
                <path d="M3.500 2.500h6v6h-6zM5 4.500h3M5 6.500h3" fill="#fff" stroke="#6b6f78" />
              </Svg>
            </ViewButton>
            <ViewButton aria-label="分页预览">
              <Svg w={13} h={11} crisp>
                <path d="M.5.5h12v10H.5z" fill="#b9bfc9" stroke="#6b6f78" />
                <path d="M1 1h4v6H1zM6 1h3v6H6z" fill="#fff" stroke="#6b6f78" />
              </Svg>
            </ViewButton>
          </ViewButtons>
          <ZoomValue>220%</ZoomValue>
          <RoundButton aria-label="缩小">
            <Svg w={8} h={8} crisp>
              <path d="M0 3h8v2H0z" fill="#44536b" />
            </Svg>
          </RoundButton>
          <ZoomRange type="range" aria-label="显示比例" min="0" max="100" defaultValue="68" />
          <RoundButton aria-label="放大">
            <Svg w={8} h={8} crisp>
              <path d="M0 3h8v2H0zM3 0h2v8H3z" fill="#44536b" />
            </Svg>
          </RoundButton>
        </StatusRight>
        <Watermark>CSDN @anlog</Watermark>
      </StatusBar>
    </Page>
  );
};

export default App;
